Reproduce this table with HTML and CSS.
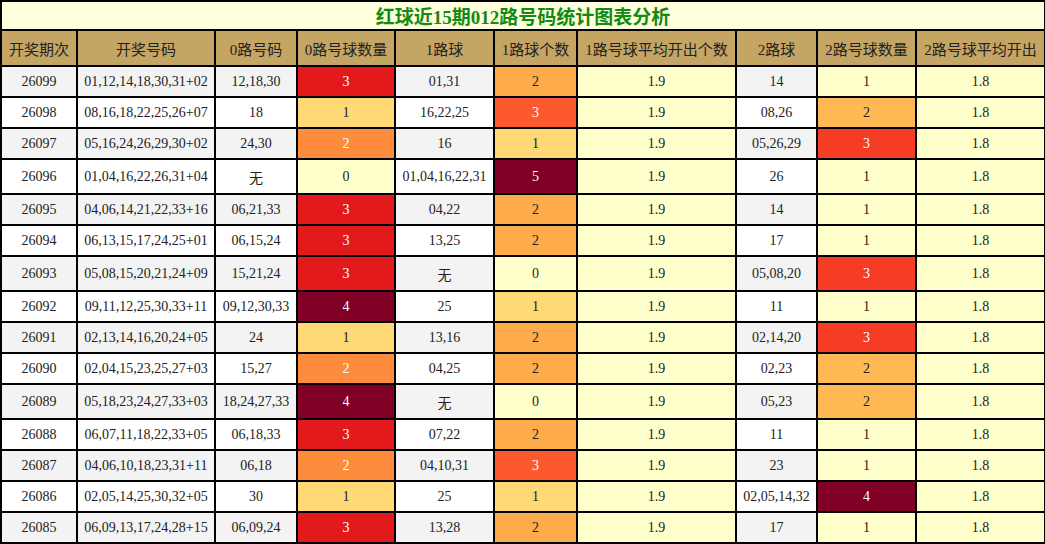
FILE: index.html
```html
<!DOCTYPE html>
<html lang="zh">
<head>
<meta charset="utf-8">
<title>红球近15期012路号码统计图表分析</title>
<link rel="stylesheet" href="styles.css">
</head>
<body>
<table class="stat">
<colgroup>
<col class="w-qi"><col class="w-hm"><col class="w-r0"><col class="w-n0"><col class="w-r1"><col class="w-n1"><col class="w-a1"><col class="w-r2"><col class="w-n2"><col class="w-a2">
</colgroup>
<thead>
<tr><th colspan="10" class="title">红球近15期012路号码统计图表分析</th></tr>
<tr class="head">
<th>开奖期次</th><th>开奖号码</th><th>0路号码</th><th>0路号球数量</th><th>1路球</th><th>1路球个数</th><th>1路号球平均开出个数</th><th>2路球</th><th>2路号球数量</th><th>2路号球平均开出</th>
</tr>
</thead>
<tbody>
<tr class="alt"><td>26099</td><td>01,12,14,18,30,31+02</td><td>12,18,30</td><td class="h5">3</td><td>01,31</td><td class="h2">2</td><td class="avg">1.9</td><td>14</td><td class="h0">1</td><td class="avg">1.8</td></tr>
<tr><td>26098</td><td>08,16,18,22,25,26+07</td><td>18</td><td class="h1">1</td><td>16,22,25</td><td class="h4">3</td><td class="avg">1.9</td><td>08,26</td><td class="h2b">2</td><td class="avg">1.8</td></tr>
<tr class="alt"><td>26097</td><td>05,16,24,26,29,30+02</td><td>24,30</td><td class="h3">2</td><td>16</td><td class="h1">1</td><td class="avg">1.9</td><td>05,26,29</td><td class="h4b">3</td><td class="avg">1.8</td></tr>
<tr><td>26096</td><td>01,04,16,22,26,31+04</td><td>无</td><td class="h0">0</td><td>01,04,16,22,31</td><td class="h6">5</td><td class="avg">1.9</td><td>26</td><td class="h0">1</td><td class="avg">1.8</td></tr>
<tr class="alt"><td>26095</td><td>04,06,14,21,22,33+16</td><td>06,21,33</td><td class="h5">3</td><td>04,22</td><td class="h2">2</td><td class="avg">1.9</td><td>14</td><td class="h0">1</td><td class="avg">1.8</td></tr>
<tr><td>26094</td><td>06,13,15,17,24,25+01</td><td>06,15,24</td><td class="h5">3</td><td>13,25</td><td class="h2">2</td><td class="avg">1.9</td><td>17</td><td class="h0">1</td><td class="avg">1.8</td></tr>
<tr class="alt"><td>26093</td><td>05,08,15,20,21,24+09</td><td>15,21,24</td><td class="h5">3</td><td>无</td><td class="h0">0</td><td class="avg">1.9</td><td>05,08,20</td><td class="h4b">3</td><td class="avg">1.8</td></tr>
<tr><td>26092</td><td>09,11,12,25,30,33+11</td><td>09,12,30,33</td><td class="h6">4</td><td>25</td><td class="h1">1</td><td class="avg">1.9</td><td>11</td><td class="h0">1</td><td class="avg">1.8</td></tr>
<tr class="alt"><td>26091</td><td>02,13,14,16,20,24+05</td><td>24</td><td class="h1">1</td><td>13,16</td><td class="h2">2</td><td class="avg">1.9</td><td>02,14,20</td><td class="h4b">3</td><td class="avg">1.8</td></tr>
<tr><td>26090</td><td>02,04,15,23,25,27+03</td><td>15,27</td><td class="h3">2</td><td>04,25</td><td class="h2">2</td><td class="avg">1.9</td><td>02,23</td><td class="h2b">2</td><td class="avg">1.8</td></tr>
<tr class="alt"><td>26089</td><td>05,18,23,24,27,33+03</td><td>18,24,27,33</td><td class="h6">4</td><td>无</td><td class="h0">0</td><td class="avg">1.9</td><td>05,23</td><td class="h2b">2</td><td class="avg">1.8</td></tr>
<tr><td>26088</td><td>06,07,11,18,22,33+05</td><td>06,18,33</td><td class="h5">3</td><td>07,22</td><td class="h2">2</td><td class="avg">1.9</td><td>11</td><td class="h0">1</td><td class="avg">1.8</td></tr>
<tr class="alt"><td>26087</td><td>04,06,10,18,23,31+11</td><td>06,18</td><td class="h3">2</td><td>04,10,31</td><td class="h4">3</td><td class="avg">1.9</td><td>23</td><td class="h0">1</td><td class="avg">1.8</td></tr>
<tr><td>26086</td><td>02,05,14,25,30,32+05</td><td>30</td><td class="h1">1</td><td>25</td><td class="h1">1</td><td class="avg">1.9</td><td>02,05,14,32</td><td class="h6">4</td><td class="avg">1.8</td></tr>
<tr class="alt"><td>26085</td><td>06,09,13,17,24,28+15</td><td>06,09,24</td><td class="h5">3</td><td>13,28</td><td class="h2">2</td><td class="avg">1.9</td><td>17</td><td class="h0">1</td><td class="avg">1.8</td></tr>
</tbody>
</table>
</body>
</html>
```
FILE: styles.css
```css
html, body {
  margin: 0;
  padding: 0;
  background: #fff;
}
.stat {
  border-collapse: collapse;
  table-layout: fixed;
  width: 1045px;
  font-family: "Liberation Serif", "Noto Sans CJK SC", serif;
  font-size: 14px;
  color: #222;
}
.w-qi { width: 76px; }
.w-hm { width: 138px; }
.w-r0 { width: 82px; }
.w-n0 { width: 98px; }
.w-r1 { width: 99px; }
.w-n1 { width: 83px; }
.w-a1 { width: 159px; }
.w-r2 { width: 81px; }
.w-n2 { width: 99px; }
.w-a2 { width: 129px; }
.stat th, .stat td {
  border: 2px solid #000;
  text-align: center;
  vertical-align: middle;
  white-space: nowrap;
  overflow: hidden;
}
.stat td {
  padding: 7px 0 6px;
  background: #fff;
}
.stat .title {
  background: #ffffdd;
  color: #138a13;
  font-size: 19px;
  font-weight: bold;
  padding: 0;
}
.head th {
  background: #c5a564;
  font-weight: normal;
  font-size: 15px;
  color: #222;
  padding: 7px 0 6px;
}
.alt td { background: #f3f3f3; }
.stat tr td.avg { background: #ffffcc; }
.stat tr td.h0 { background: #ffffcc; }
.stat tr td.h1 { background: #fed976; }
.stat tr td.h2 { background: #feac4b; }
.stat tr td.h2b { background: #feb955; }
.stat tr td.h3 { background: #fd8d3c; color: #fff; }
.stat tr td.h4 { background: #fc5a2e; color: #fff; }
.stat tr td.h4b { background: #f53d26; color: #fff; }
.stat tr td.h5 { background: #e31a1c; color: #fff; }
.stat tr td.h6 { background: #800026; color: #fff; }
```
